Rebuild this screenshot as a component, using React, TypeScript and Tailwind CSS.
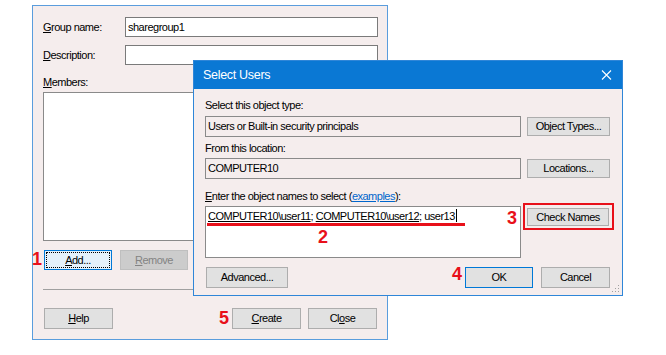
import React from "react";

function Btn({
  children,
  className = "",
}: {
  children: React.ReactNode;
  className?: string;
}) {
  return (
    <div
      className={
        "flex items-center justify-center border border-[#adadad] bg-[#e1e1e1] text-black " +
        className
      }
    >
      {children}
    </div>
  );
}

function U({ children }: { children: React.ReactNode }) {
  return <span className="underline underline-offset-[1px] decoration-[1px]">{children}</span>;
}

export default function App() {
  return (
    <div className="relative w-[666px] h-[355px] bg-white overflow-hidden font-['Liberation_Sans',Arial,sans-serif] text-[11px] tracking-[-0.5px] text-black">
      {/* New Group dialog */}
      <div className="absolute left-[32px] top-[5px] w-[356px] h-[335px] border border-[#5a9ddd] bg-[#f5eded] flex flex-col pl-[10px] pr-[9px] pt-[11px]">
        <div className="flex items-center h-[20px]">
          <div className="w-[82px]">
            <U>G</U>roup name:
          </div>
          <div className="flex-1 h-[20px] border border-[#7a7a7a] bg-white flex items-center pl-[2px]">
            sharegroup1
          </div>
        </div>
        <div className="flex items-center h-[20px] mt-[8px]">
          <div className="w-[82px]">
            <U>D</U>escription:
          </div>
          <div className="flex-1 h-[20px] border border-[#7a7a7a] bg-white" />
        </div>
        <div className="h-[16px] leading-[16px] mt-[9px]">
          <U>M</U>embers:
        </div>
        <div className="h-[149px] mt-[2px] border border-[#8a8a8a] bg-white" />
        <div className="flex gap-[8px] mt-[9px] pl-[1px]">
          <div className="w-[68px] h-[20px] border border-[#0078d7] bg-[#e5f1fb] p-[1px]">
            <div className="w-full h-full border border-dotted border-black flex items-center justify-center">
              <span>
                <U>A</U>dd...
              </span>
            </div>
          </div>
          <div className="w-[68px] h-[20px] border border-[#bfbfbf] bg-[#cccccc] text-[#838383] flex items-center justify-center">
            <span>
              <U>R</U>emove
            </span>
          </div>
        </div>
        <div className="h-px bg-[#a0a0a0] mt-[19px]" />
        <div className="flex mt-[18px] pl-[1px] pr-[1px]">
          <Btn className="w-[69px] h-[21px]">
            <span>
              <U>H</U>elp
            </span>
          </Btn>
          <div className="flex-1" />
          <Btn className="w-[69px] h-[21px]">
            <span>
              <U>C</U>reate
            </span>
          </Btn>
          <Btn className="w-[69px] h-[21px] ml-[7px]">
            <span>
              Cl<U>o</U>se
            </span>
          </Btn>
        </div>
      </div>

      {/* Select Users dialog */}
      <div className="absolute left-[193px] top-[60px] w-[430px] h-[236px] border border-[#2f86d8] bg-[#f5eded] flex flex-col">
        <div className="h-[28px] bg-[#0a78d4] flex items-center justify-between pl-[9px] pr-[10px] text-white text-[12.5px] tracking-[-0.3px]">
          <span>Select Users</span>
          <svg width="11" height="10" viewBox="0 0 11 10" className="mr-[0px]">
            <path d="M1 0.5 L10 9.5 M10 0.5 L1 9.5" stroke="white" strokeWidth="1.1" />
          </svg>
        </div>
        <div className="flex flex-col pl-[11px] pr-[12px] pt-[8px]">
          <div className="h-[16px] leading-[16px]">Select this object type:</div>
          <div className="flex items-center mt-[3px] gap-[6px]">
            <div className="w-[316px] h-[21px] border border-[#8a8a8a] bg-[#f5eded] flex items-center pl-[2px]">
              Users or Built-in security principals
            </div>
            <Btn className="w-[83px] h-[19px]">Object Types...</Btn>
          </div>
          <div className="h-[16px] leading-[16px] mt-[3px]">From this location:</div>
          <div className="flex items-center mt-[2px] gap-[6px]">
            <div className="w-[316px] h-[21px] border border-[#8a8a8a] bg-[#f5eded] flex items-center pl-[2px]">
              COMPUTER10
            </div>
            <Btn className="w-[83px] h-[19px]">Locations...</Btn>
          </div>
          <div className="h-[16px] leading-[16px] mt-[9px]">
            <U>E</U>nter the object names to select (
            <span className="text-[#0066cc] underline">examples</span>):
          </div>
          <div className="flex items-start mt-[2px] gap-[6px]">
            <div className="w-[316px] h-[52px] border border-[#8a8a8a] bg-white pl-[2px] pt-[2px] leading-[14px]">
              <span className="underline">COMPUTER10\user11</span>;{" "}
              <span className="underline">COMPUTER10\user12</span>; user13
              <span className="inline-block w-px h-[13px] bg-black align-[-2px] ml-[1px]" />
            </div>
            <Btn className="w-[82px] h-[18px] mt-[2px]">Check Names</Btn>
          </div>
          <div className="flex items-center mt-[9px] pl-[1px]">
            <Btn className="w-[82px] h-[21px]">Advanced...</Btn>
            <div className="flex-1" />
            <div className="w-[68px] h-[21px] border border-[#0078d7] bg-[#e1e1e1] flex items-center justify-center">
              OK
            </div>
            <Btn className="w-[69px] h-[21px] ml-[8px]">Cancel</Btn>
          </div>
        </div>
        {/* resize grip */}
        <svg width="8" height="8" viewBox="0 0 8 8" className="absolute right-[2px] bottom-[2px]">
          <rect x="6" y="0" width="1" height="1" fill="#a0a0a0" />
          <rect x="3" y="3" width="1" height="1" fill="#a0a0a0" />
          <rect x="6" y="3" width="1" height="1" fill="#a0a0a0" />
          <rect x="0" y="6" width="1" height="1" fill="#a0a0a0" />
          <rect x="3" y="6" width="1" height="1" fill="#a0a0a0" />
          <rect x="6" y="6" width="1" height="1" fill="#a0a0a0" />
        </svg>
      </div>

      {/* annotations */}
      <div className="absolute left-[207px] top-[223px] w-[258px] h-[3px] bg-[#e8101a]" />
      <div className="absolute left-[523px] top-[203px] w-[91px] h-[27px] border-2 border-[#e8101a]" />
      <div className="absolute left-[32px] top-[249px] text-[#e8101a] font-bold text-[18px] leading-[20px] tracking-normal">1</div>
      <div className="absolute left-[318px] top-[227px] text-[#e8101a] font-bold text-[18px] leading-[20px] tracking-normal">2</div>
      <div className="absolute left-[507px] top-[208px] text-[#e8101a] font-bold text-[18px] leading-[20px] tracking-normal">3</div>
      <div className="absolute left-[452px] top-[264px] text-[#e8101a] font-bold text-[18px] leading-[20px] tracking-normal">4</div>
      <div className="absolute left-[219px] top-[308px] text-[#e8101a] font-bold text-[18px] leading-[20px] tracking-normal">5</div>
    </div>
  );
}
